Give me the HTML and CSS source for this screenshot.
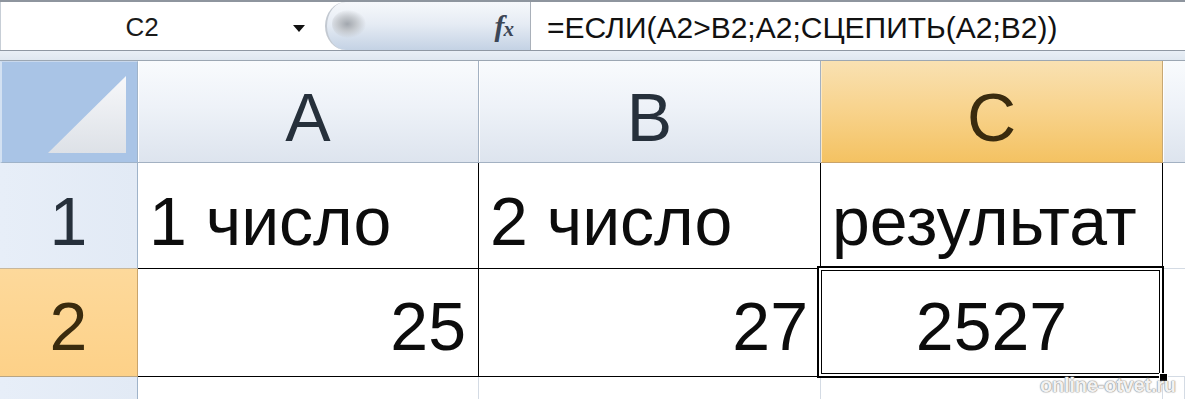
FILE: index.html
```html
<!DOCTYPE html>
<html lang="ru">
<head>
<meta charset="utf-8">
<title>Excel — СЦЕПИТЬ</title>
<link rel="stylesheet" href="styles.css">
</head>
<body>
<div class="app">
  <div class="fbar">
    <div class="namebox">
      <span class="ref">C2</span>
      <span class="arrow"></span>
    </div>
    <div class="fxzone">
      <span class="knob"></span>
      <span class="fx"><i>f</i><span class="fx-x">x</span></span>
    </div>
    <div class="formula">=ЕСЛИ(A2&gt;B2;A2;СЦЕПИТЬ(A2;B2))</div>
  </div>
  <div class="band"></div>
  <div class="sheet">
    <div class="corner">
      <svg class="tri" width="137" height="100" viewBox="0 0 137 100">
        <defs>
          <linearGradient id="tg" x1="0" y1="0" x2="0" y2="1">
            <stop offset="0" stop-color="#f7f8fa"/>
            <stop offset="1" stop-color="#dde1e7"/>
          </linearGradient>
        </defs>
        <polygon points="48,92 126,15 126,92" fill="url(#tg)"/>
      </svg>
    </div>
    <div class="colhead">A</div>
    <div class="colhead">B</div>
    <div class="colhead sel">C</div>
    <div class="colhead rest"></div>

    <div class="rowhead r1">1</div>
    <div class="cell bord r1 left">1 число</div>
    <div class="cell bord r1 left">2 число</div>
    <div class="cell bord r1 left">результат</div>
    <div class="cell plain r1"></div>

    <div class="rowhead sel r2">2</div>
    <div class="cell bord r2 right">25</div>
    <div class="cell bord r2 right">27</div>
    <div class="cell bord r2 center active">2527<span class="selbox"></span><span class="handle"></span></div>
    <div class="cell plain r2"></div>

    <div class="rowhead r3"></div>
    <div class="cell grid r3"></div>
    <div class="cell grid r3"></div>
    <div class="cell grid r3"></div>
    <div class="cell grid r3"></div>
  </div>
  <div class="watermark">online-otvet.ru</div>
</div>
</body>
</html>
```

FILE: styles.css
```css
* { box-sizing: border-box; }

html, body {
  margin: 0;
  padding: 0;
  background: #ffffff;
}

.app {
  position: relative;
  width: 1185px;
  height: 400px;
  overflow: hidden;
  font-family: "Liberation Sans", Arial, sans-serif;
  background: #ffffff;
}

/* ---------- formula bar ---------- */
.fbar {
  display: flex;
  height: 51px;
  border-top: 2px solid #8e959e;
  border-bottom: 1px solid #8f98a3;
  background: #ffffff;
}

.namebox {
  width: 325px;
  display: flex;
  align-items: center;
  border-left: 1px solid #c7ced6;
  padding-top: 3px;
}

.ref {
  width: 282px;
  text-align: center;
  font-size: 26px;
  color: #1a1a1a;
  padding-left: 0;
}

.arrow {
  width: 0;
  height: 0;
  margin-left: 10px;
  margin-top: 2px;
  border-left: 6px solid transparent;
  border-right: 6px solid transparent;
  border-top: 7px solid #111111;
}

.fxzone {
  position: relative;
  width: 206px;
  display: flex;
  align-items: center;
  justify-content: flex-end;
  padding-right: 16px;
  background: linear-gradient(#f6f8fb 0%, #e6ecf4 45%, #c4d2e4 100%);
  border-left: 2px solid #c3c9d1;
  border-right: 1px solid #a9b0b9;
  border-radius: 26px 0 0 26px / 30px 0 0 30px;
}

.knob {
  position: absolute;
  left: 5px;
  top: 8px;
  width: 34px;
  height: 28px;
  border-radius: 50%;
  background: radial-gradient(ellipse at 45% 50%, #a2a7ae 0%, #c4c8cd 35%, rgba(240,242,246,0) 72%);
}

.fx {
  font-family: "Liberation Serif", "Times New Roman", serif;
  font-weight: bold;
  color: #3c4656;
  font-size: 30px;
  line-height: 1;
  margin-top: -1px;
}

.fx i {
  font-style: italic;
}

.fx-x {
  font-style: italic;
  font-size: 21px;
  margin-left: -1px;
}

.formula {
  flex: 1;
  display: flex;
  align-items: center;
  padding-left: 16px;
  padding-top: 4px;
  font-size: 30px;
  color: #111111;
  white-space: nowrap;
}

/* ---------- band between bar and grid ---------- */
.band {
  height: 10px;
  background: linear-gradient(#e9eff6, #dfe7f0);
  border-bottom: 1px solid #9ca7b3;
}

/* ---------- sheet grid ---------- */
.sheet {
  display: grid;
  grid-template-columns: 138px 341px 342px 342px 1fr;
  grid-template-rows: 102px 106px 108px 1fr;
  height: 338px;
  font-size: 68px;
  line-height: 68px;
}

.corner {
  background: #a9c4e6;
  border-right: 1px solid #9fb3c9;
  border-bottom: 1px solid #9fb3c9;
  border-left: 2px solid #d3e1f2;
  border-top: 1px solid #c9d8ec;
  position: relative;
}

.tri {
  display: block;
  position: absolute;
  left: -2px;
  top: -1px;
}

.colhead {
  display: flex;
  align-items: flex-end;
  justify-content: center;
  padding-bottom: 11px;
  color: #26303b;
  background: linear-gradient(#f9fbfd 0%, #eef2f8 45%, #dde4ee 100%);
  border-right: 1px solid #a3b1c2;
  border-bottom: 1px solid #a3b1c2;
  box-shadow: inset 1px 0 0 #ffffff;
}

.colhead.sel {
  color: #3a2b0e;
  background: linear-gradient(#f9e1b2 0%, #f8d48f 45%, #f4c262 100%);
  border-right: 1px solid #c8a873;
  border-bottom: 1px solid #c9a36a;
  box-shadow: inset 1px 0 0 #fbe8c4;
}

.colhead.rest {
  border-right: none;
}

.rowhead {
  display: flex;
  align-items: flex-end;
  justify-content: center;
  color: #26303b;
  background: linear-gradient(90deg, #e7eef8, #e2eaf5);
  border-right: 1px solid #9fb3c9;
  border-bottom: 1px solid #b9c6d4;
}

.rowhead.sel {
  color: #3a2b0e;
  background: linear-gradient(#fdd99b, #fdd188);
  border-right: 1px solid #c9a46b;
  border-bottom: 1px solid #b9a583;
}

.rowhead.r1 { padding-bottom: 13px; border-bottom-color: #c7b79c; }
.rowhead.r2 { padding-bottom: 16px; }
.rowhead.r3 { border-bottom: none; }

.cell {
  display: flex;
  align-items: flex-end;
  color: #0c0c0c;
  background: #ffffff;
  white-space: nowrap;
}

.cell.r1 { padding-bottom: 13px; }
.cell.r2 { padding-bottom: 16px; }

.cell.bord {
  border-right: 1px solid #000000;
  border-bottom: 1px solid #000000;
}

.cell.plain {
  border-bottom: 1px solid #d4dbe4;
}

.cell.grid {
  border-right: 1px solid #d4dbe4;
}

.cell.left { justify-content: flex-start; padding-left: 11px; }
.cell.right { justify-content: flex-end; padding-right: 12px; }
.cell.center { justify-content: center; }

.cell.active {
  position: relative;
}

.selbox {
  position: absolute;
  left: -4px;
  top: -3px;
  right: -2px;
  bottom: -2px;
  border: 2px solid #000000;
  box-shadow: inset 0 0 0 2px #ffffff, inset 0 0 0 3px #000000;
  pointer-events: none;
}

.handle {
  position: absolute;
  right: -6px;
  bottom: -6px;
  width: 9px;
  height: 9px;
  background: #000000;
  border: 1px solid #ffffff;
}

/* ---------- watermark ---------- */
.watermark {
  position: absolute;
  left: 1040px;
  top: 374px;
  font-family: "Liberation Sans", Arial, sans-serif;
  font-weight: bold;
  font-size: 20px;
  line-height: 22px;
  color: #f2f2f2;
  letter-spacing: -0.2px;
  text-shadow: 0 0 1px #8c8c8c, 0 0 1px #8c8c8c, 0 0 2px #b0b0b0;
  white-space: nowrap;
}
```
